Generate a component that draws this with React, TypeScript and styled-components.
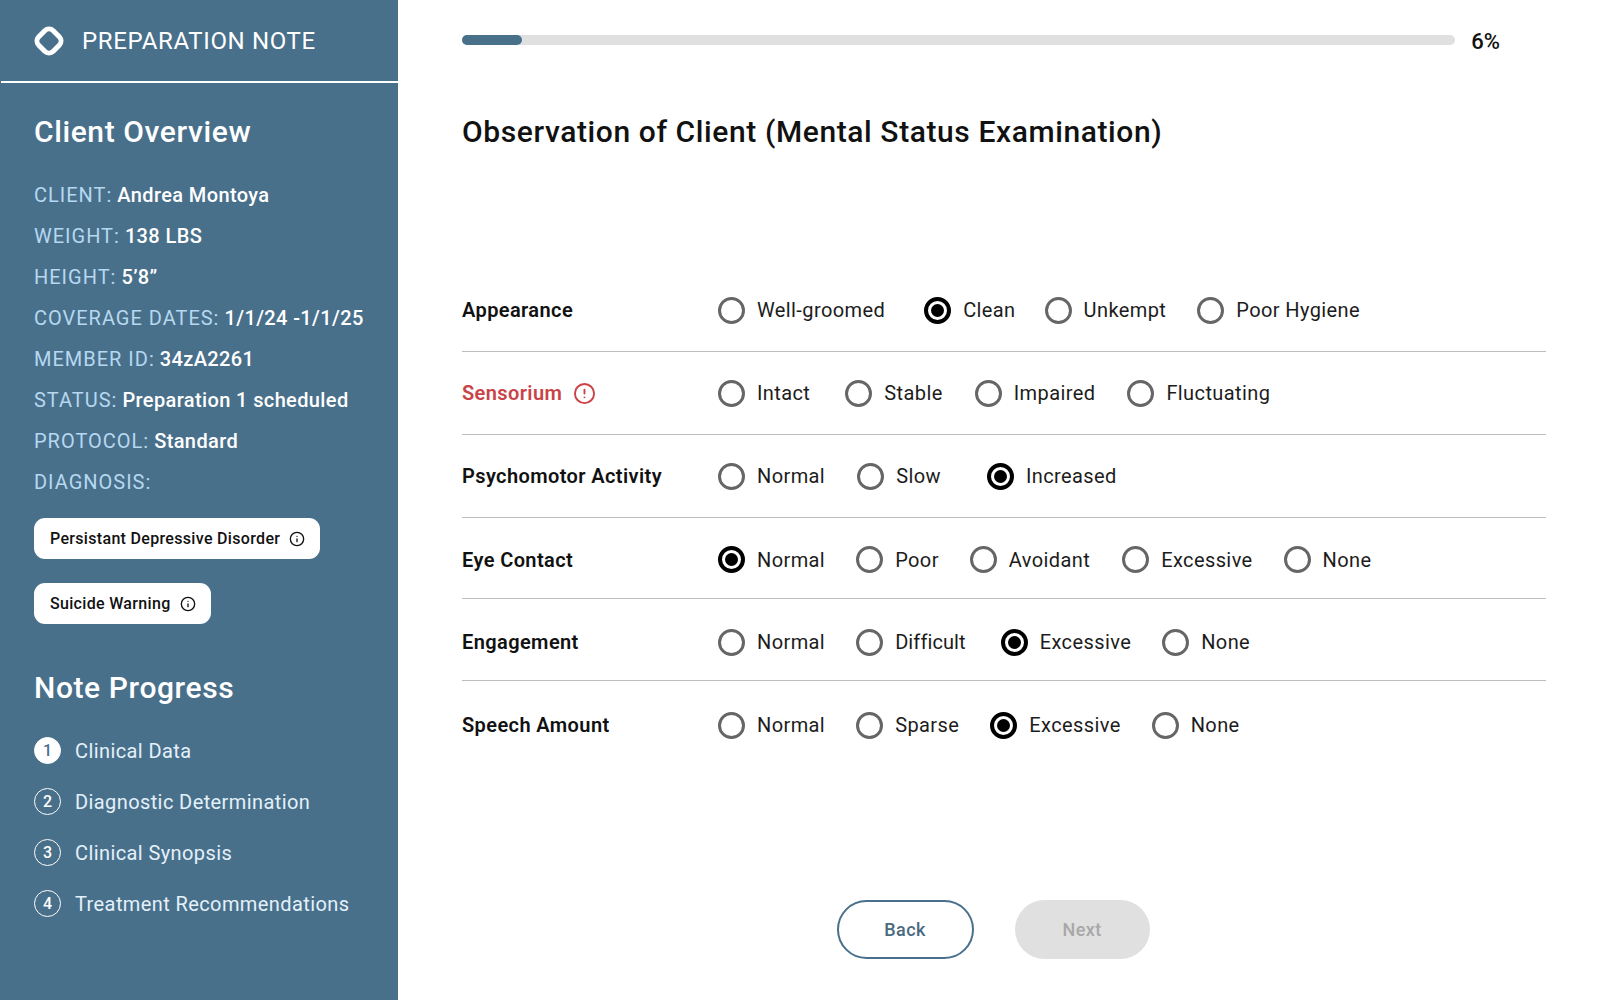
import styled, { createGlobalStyle } from 'styled-components';
import { Info, CircleAlert } from 'lucide-react';

const GlobalStyle = createGlobalStyle`
  html, body {
    margin: 0;
    padding: 0;
    background: #fff;
    font-family: Roboto, "Liberation Sans", sans-serif;
  }
  * { box-sizing: border-box; }
`;

const Page = styled.div`
  display: flex;
  height: 1000px;
  overflow: hidden;
`;

const Sidebar = styled.aside`
  width: 398px;
  flex-shrink: 0;
  background: #49708b;
  color: #fff;
`;

const Brand = styled.header`
  height: 83px;
  display: flex;
  align-items: center;
  gap: 17px;
  padding-left: 32px;
  margin-left: 1px;
  border-bottom: 2px solid #fff;
`;

const BrandName = styled.span`
  font-size: 24px;
  letter-spacing: 0.65px;
`;

const SideBody = styled.div`
  padding: 0 0 0 34px;
`;

const SideTitle = styled.h2<{ $top: number }>`
  margin: ${({ $top }) => $top}px 0 0;
  font-size: 30px;
  line-height: 40px;
  font-weight: 500;
  letter-spacing: 0.6px;
`;

const Facts = styled.div`
  margin-top: 22px;
`;

const Fact = styled.div`
  height: 41px;
  display: flex;
  align-items: center;
  gap: 5px;
  font-size: 20px;
`;

const FactLabel = styled.span`
  color: #b6d8f0;
  font-weight: 400;
  letter-spacing: 0.99px;
`;

const FactValue = styled.span`
  font-weight: 500;
  letter-spacing: 0.38px;
`;

const Pills = styled.div`
  margin-top: 16px;
  display: flex;
  flex-direction: column;
  align-items: flex-start;
  gap: 24px;
`;

const Pill = styled.div`
  height: 41px;
  display: flex;
  align-items: center;
  gap: 9px;
  padding: 0 15px 0 16px;
  background: #fff;
  color: #111;
  border-radius: 11px;
  font-size: 16px;
  font-weight: 500;
  letter-spacing: 0.32px;
`;

const Steps = styled.div`
  margin-top: 29px;
  display: flex;
  flex-direction: column;
  gap: 24px;
`;

const Step = styled.div`
  height: 27px;
  display: flex;
  align-items: center;
  gap: 14px;
  font-size: 20px;
  letter-spacing: 0.4px;
  color: #e4f1fa;
`;

const StepBadge = styled.span<{ $active?: boolean }>`
  width: 27px;
  height: 27px;
  border-radius: 50%;
  display: flex;
  align-items: center;
  justify-content: center;
  border: 1.5px solid #fff;
  background: ${({ $active }) => ($active ? '#fff' : 'transparent')};
  color: ${({ $active }) => ($active ? '#49708b' : '#fff')};
  font-size: 16px;
  font-weight: 500;
  letter-spacing: 0;
`;

const Main = styled.main`
  flex: 1;
  padding: 0 64px 0 64px;
  display: flex;
  flex-direction: column;
`;

const ProgressRow = styled.div`
  height: 80px;
  display: flex;
  align-items: center;
  gap: 16px;
  padding-right: 46px;
`;

const Track = styled.div`
  flex: 1;
  height: 10px;
  background: #e0e0e0;
  border-radius: 5px;
`;

const Fill = styled.div`
  height: 100%;
  background: #49708b;
  border-radius: 5px;
`;

const Percent = styled.span`
  padding-top: 3px;
  font-size: 22px;
  line-height: 26px;
  font-weight: 500;
  color: #111;
`;

const Title = styled.h1`
  margin: 32px 0 0;
  font-size: 30px;
  line-height: 40px;
  font-weight: 500;
  letter-spacing: 0.6px;
  color: #111;
`;

const Rows = styled.div`
  margin-top: 117px;
`;

// the rows are not quite even in the design, so height and content shift vary
const Row = styled.div<{ $height: number; $shift: number }>`
  height: ${({ $height }) => $height}px;
  padding-top: ${({ $shift }) => $shift}px;
  display: flex;
  align-items: center;
  border-bottom: 1px solid #bdbdbd;

  &:last-child {
    border-bottom: none;
  }
`;

const RowLabel = styled.div<{ $alert?: boolean }>`
  width: 256px;
  display: flex;
  align-items: center;
  gap: 11px;
  font-size: 20px;
  font-weight: 600;
  letter-spacing: 0.4px;
  color: ${({ $alert }) => ($alert ? '#c94347' : '#111')};
`;

const Options = styled.div`
  display: flex;
  align-items: center;
`;

const Option = styled.div<{ $after: number }>`
  display: flex;
  align-items: center;
  gap: 12px;
  margin-right: ${({ $after }) => $after}px;
  font-size: 20px;
  color: #1c1c1c;
`;

const OptionText = styled.span<{ $tight: boolean }>`
  letter-spacing: ${({ $tight }) => ($tight ? '0.1px' : '0.4px')};
`;

const Radio = styled.span<{ $checked?: boolean }>`
  width: 27px;
  height: 27px;
  border-radius: 50%;
  display: flex;
  align-items: center;
  justify-content: center;
  border: ${({ $checked }) => ($checked ? '4px solid #000' : '3px solid #666')};

  &::after {
    content: '';
    display: ${({ $checked }) => ($checked ? 'block' : 'none')};
    width: 13px;
    height: 13px;
    border-radius: 50%;
    background: #000;
  }
`;

const Actions = styled.div`
  margin-top: 136px;
  display: flex;
  justify-content: center;
  gap: 41px;
  padding-right: 22px;
`;

const Button = styled.button<{ $disabled?: boolean }>`
  width: ${({ $disabled }) => ($disabled ? 135 : 137)}px;
  height: 59px;
  border-radius: 30px;
  border: ${({ $disabled }) => ($disabled ? 'none' : '2px solid #49708b')};
  background: ${({ $disabled }) => ($disabled ? '#e0e0e0' : '#fff')};
  color: ${({ $disabled }) => ($disabled ? '#a8a8a8' : '#4a6a80')};
  font-family: inherit;
  font-size: 18px;
  font-weight: 500;
  letter-spacing: 0.4px;
`;

const facts = [
  ['CLIENT:', 'Andrea Montoya'],
  ['WEIGHT:', '138 LBS'],
  ['HEIGHT:', '5’8”'],
  ['COVERAGE DATES:', '1/1/24 -1/1/25'],
  ['MEMBER ID:', '34zA2261'],
  ['STATUS:', 'Preparation 1 scheduled'],
  ['PROTOCOL:', 'Standard'],
  ['DIAGNOSIS:', ''],
];

const steps = ['Clinical Data', 'Diagnostic Determination', 'Clinical Synopsis', 'Treatment Recommendations'];

// per row: label, options, checked index, spacing after each option
const questions = [
  { label: 'Appearance', height: 83, shift: 0, options: ['Well-groomed', 'Clean', 'Unkempt', 'Poor Hygiene'], checked: 1, after: [39, 29, 31, 0] },
  { label: 'Sensorium', height: 83, shift: 0, alert: true, options: ['Intact', 'Stable', 'Impaired', 'Fluctuating'], checked: -1, after: [35, 32, 32, 0] },
  { label: 'Psychomotor Activity', height: 83, shift: 0, options: ['Normal', 'Slow', 'Increased'], checked: 2, after: [32, 46, 0] },
  { label: 'Eye Contact', height: 81, shift: 3, options: ['Normal', 'Poor', 'Avoidant', 'Excessive', 'None'], checked: 0, after: [31, 31, 32, 31, 0] },
  { label: 'Engagement', height: 82, shift: 5, options: ['Normal', 'Difficult', 'Excessive', 'None'], checked: 2, after: [31, 35, 31, 0] },
  { label: 'Speech Amount', height: 83, shift: 5, options: ['Normal', 'Sparse', 'Excessive', 'None'], checked: 2, after: [31, 31, 31, 0] },
];

const App = () => (
  <>
    <GlobalStyle />
    <Page>
      <Sidebar>
        <Brand>
          <svg width="32" height="32" viewBox="0 0 32 32" fill="none">
            <rect x="5.75" y="5.75" width="20.5" height="20.5" rx="6" transform="rotate(45 16 16)" stroke="#fff" strokeWidth="5" />
          </svg>
          <BrandName>PREPARATION NOTE</BrandName>
        </Brand>
        <SideBody>
          <SideTitle $top={29}>Client Overview</SideTitle>
          <Facts>
            {facts.map(([label, value]) => (
              <Fact key={label}>
                <FactLabel>{label}</FactLabel>
                {value && <FactValue>{value}</FactValue>}
              </Fact>
            ))}
          </Facts>
          <Pills>
            <Pill>
              Persistant Depressive Disorder
              <Info size={16} strokeWidth={2} />
            </Pill>
            <Pill>
              Suicide Warning
              <Info size={16} strokeWidth={2} />
            </Pill>
          </Pills>
          <SideTitle $top={44}>Note Progress</SideTitle>
          <Steps>
            {steps.map((step, i) => (
              <Step key={step}>
                <StepBadge $active={i === 0}>{i + 1}</StepBadge>
                {step}
              </Step>
            ))}
          </Steps>
        </SideBody>
      </Sidebar>
      <Main>
        <ProgressRow>
          <Track>
            <Fill style={{ width: '6%' }} />
          </Track>
          <Percent>6%</Percent>
        </ProgressRow>
        <Title>Observation of Client (Mental Status Examination)</Title>
        <Rows>
          {questions.map((q) => (
            <Row key={q.label} $height={q.height} $shift={q.shift}>
              <RowLabel $alert={q.alert}>
                {q.label}
                {q.alert && <CircleAlert size={23} strokeWidth={2} />}
              </RowLabel>
              <Options>
                {q.options.map((option, i) => (
                  <Option key={option} $after={q.after[i]}>
                    <Radio $checked={i === q.checked} />
                    <OptionText $tight={option === 'Difficult'}>{option}</OptionText>
                  </Option>
                ))}
              </Options>
            </Row>
          ))}
        </Rows>
        <Actions>
          <Button>Back</Button>
          <Button $disabled>Next</Button>
        </Actions>
      </Main>
    </Page>
  </>
);

export default App;
